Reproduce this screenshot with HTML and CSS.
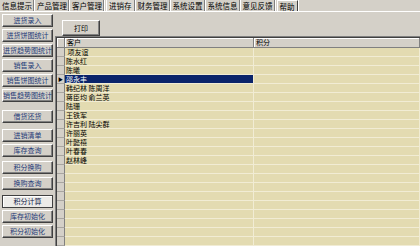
FILE: index.html
```html
<!DOCTYPE html>
<html lang="zh-CN">
<head>
    <meta charset="UTF-8">
    <title>进销存</title>
    <link rel="stylesheet" href="styles.css">
</head>
<body>
    <div class="tabs">
        <span class="tab">信息提示</span>
        <span class="tab">产品管理</span>
        <span class="tab">客户管理</span>
        <span class="tab active">进销存</span>
        <span class="tab">财务管理</span>
        <span class="tab">系统设置</span>
        <span class="tab">系统信息</span>
        <span class="tab">意见反馈</span>
        <span class="tab boxed">帮助</span>
    </div>
    <div class="main">
        <div class="sidebar">
            <button class="side-btn">进货录入</button>
            <button class="side-btn">进货饼图统计</button>
            <button class="side-btn">进货趋势图统计</button>
            <button class="side-btn">销售录入</button>
            <button class="side-btn">销售饼图统计</button>
            <button class="side-btn">销售趋势图统计</button>
            <button class="side-btn gap-8">借货还货</button>
            <button class="side-btn gap-6">进销清单</button>
            <button class="side-btn">库存查询</button>
            <button class="side-btn gap-4">积分换购</button>
            <button class="side-btn gap-3">换购查询</button>
            <button class="side-btn gap-5 current">积分计算</button>
            <button class="side-btn">库存初始化</button>
            <button class="side-btn">积分初始化</button>
        </div>
        <div class="work">
            <div class="toolbar">
                <button class="print-btn">打印</button>
            </div>
            <div class="grid">
                <div class="row head"><span class="ind"></span><span class="cell">客户</span><span class="cell">积分</span></div>
                <div class="row"><span class="ind"></span><span class="cell">&nbsp;项友谊</span><span class="cell"></span></div>
                <div class="row"><span class="ind"></span><span class="cell">陈水红</span><span class="cell"></span></div>
                <div class="row"><span class="ind"></span><span class="cell">陈曦</span><span class="cell"></span></div>
                <div class="row selected"><span class="ind">&#9654;</span><span class="cell">邵永丰</span><span class="cell"></span></div>
                <div class="row"><span class="ind"></span><span class="cell">韩纪林 陈周洋</span><span class="cell"></span></div>
                <div class="row"><span class="ind"></span><span class="cell">蒋臣均 俞兰英</span><span class="cell"></span></div>
                <div class="row"><span class="ind"></span><span class="cell">陆珊</span><span class="cell"></span></div>
                <div class="row"><span class="ind"></span><span class="cell">王铁军</span><span class="cell"></span></div>
                <div class="row"><span class="ind"></span><span class="cell">许吉利 陆尖群</span><span class="cell"></span></div>
                <div class="row"><span class="ind"></span><span class="cell">许丽英</span><span class="cell"></span></div>
                <div class="row"><span class="ind"></span><span class="cell">叶懿禧</span><span class="cell"></span></div>
                <div class="row"><span class="ind"></span><span class="cell">叶春春</span><span class="cell"></span></div>
                <div class="row"><span class="ind"></span><span class="cell">赵林峰</span><span class="cell"></span></div>
                <div class="row"><span class="ind"></span><span class="cell"></span><span class="cell"></span></div>
                <div class="row"><span class="ind"></span><span class="cell"></span><span class="cell"></span></div>
                <div class="row"><span class="ind"></span><span class="cell"></span><span class="cell"></span></div>
                <div class="row"><span class="ind"></span><span class="cell"></span><span class="cell"></span></div>
                <div class="row"><span class="ind"></span><span class="cell"></span><span class="cell"></span></div>
                <div class="row"><span class="ind"></span><span class="cell"></span><span class="cell"></span></div>
                <div class="row"><span class="ind"></span><span class="cell"></span><span class="cell"></span></div>
                <div class="row"><span class="ind"></span><span class="cell"></span><span class="cell"></span></div>
                <div class="row"><span class="ind"></span><span class="cell"></span><span class="cell"></span></div>
                <div class="row"><span class="ind"></span><span class="cell"></span><span class="cell"></span></div>
            </div>
        </div>
    </div>
</body>
</html>
```

FILE: styles.css
```css
body {
    margin: 0;
    padding: 0;
    width: 420px;
    height: 246px;
    overflow: hidden;
    background-color: #d4d0c8;
    font-family: "Noto Sans CJK SC", "Noto Sans", sans-serif;
    color: #000;
}

/* top tab strip */
.tabs {
    display: flex;
    height: 11px;
    border-bottom: 1px solid #fff;
    padding-left: 1px;
}

.tab {
    font-size: 7.5px;
    line-height: 11px;
    padding: 0 1px;
    border-right: 1px solid #808080;
    box-shadow: 1px 0 0 #fff;
    margin-right: 2px;
    white-space: nowrap;
}

.tab.active {
    border-left: 1px solid #fff;
    background-color: #dcd9d2;
    padding: 0 2px;
}

.tab.boxed {
    border-left: 1px solid #fff;
    border-top: 1px solid #fff;
    border-right: 1px solid #404040;
    padding: 0 2px;
}

.main {
    display: flex;
}

/* left button column */
.sidebar {
    display: flex;
    flex-direction: column;
    width: 51px;
    padding: 2px 0 0 2px;
    gap: 2px;
}

.side-btn {
    width: 51px;
    height: 13px;
    padding: 0;
    margin: 0;
    font-family: inherit;
    font-size: 7px;
    line-height: 11px;
    color: #1e3a78;
    background-color: #d4d0c8;
    border: 1px solid;
    border-color: #fff #404040 #404040 #fff;
    box-shadow: inset -1px -1px 0 #808080;
    white-space: nowrap;
    overflow: hidden;
}

.side-btn.gap-3 { margin-top: 1px; }
.side-btn.gap-4 { margin-top: 2px; }
.side-btn.gap-5 { margin-top: 3px; }
.side-btn.gap-6 { margin-top: 4px; }
.side-btn.gap-8 { margin-top: 6px; }

.side-btn.current {
    background-color: #ecebe8;
    border-color: #404040;
    box-shadow: inset 1px 1px 0 #fff;
    color: #10204a;
}

.work {
    flex: 1;
    margin-left: 2px;
}

.toolbar {
    height: 24px;
}

.print-btn {
    margin: 4px 0 0 7px;
    width: 38px;
    height: 16px;
    padding: 0;
    font-family: inherit;
    font-size: 7px;
    color: #000;
    background-color: #d4d0c8;
    border: 1px solid;
    border-color: #fff #404040 #404040 #fff;
    box-shadow: inset -1px -1px 0 #808080;
}

/* customer grid */
.grid {
    border-top: 1px solid #808080;
    border-left: 1px solid #808080;
    box-shadow: inset 1px 1px 0 #404040;
    padding: 1px 0 0 1px;
    background-color: #e3dbb1;
}

.row {
    display: grid;
    grid-template-columns: 8px 189px 1fr;
    height: 9px;
}

.row .ind {
    background-color: #d4d0c8;
    border-right: 1px solid #808080;
    border-bottom: 1px solid #a8a5a0;
    font-size: 5px;
    line-height: 8px;
    text-align: center;
}

.row .cell {
    font-size: 7px;
    line-height: 8px;
    padding-left: 1px;
    border-bottom: 1px solid #f1ecd4;
    border-right: 1px solid #f1ecd4;
    white-space: nowrap;
    overflow: hidden;
}

.row.head {
    height: 10px;
}

.row.head .ind,
.row.head .cell {
    background-color: #d4d0c8;
    border-bottom: 1px solid #808080;
    border-right: 1px solid #808080;
    box-shadow: inset 1px 1px 0 #fff;
    line-height: 9px;
    padding-left: 2px;
}

.row.selected .cell:nth-child(2) {
    background-color: #0a246a;
    color: #fff;
}
```
